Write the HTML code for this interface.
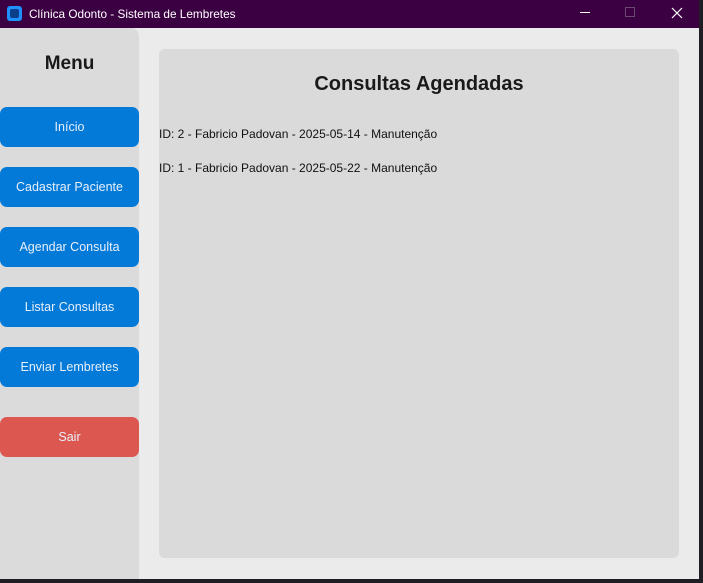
<!DOCTYPE html>
<html><head><style>
*{margin:0;padding:0;box-sizing:border-box}
body{width:703px;height:583px;background:#1e1e24;position:relative;overflow:hidden;font-family:"Liberation Sans",sans-serif}
#win{position:absolute;left:0;top:0;width:699px;height:579px;background:#ebebeb}
#title{position:absolute;left:0;top:0;width:699px;height:28px;background:#3b0042;color:#fff;font-size:11.8px}
#title .t{position:absolute;left:29px;top:7px}
#icon{position:absolute;left:7px;top:6px;width:15px;height:15px;border-radius:3px;background:#1e90ff}
#icon:after{content:"";position:absolute;left:3px;top:3px;width:9px;height:9px;border-radius:2px;background:#0b3f8a}
#side{position:absolute;left:0;top:28px;width:139px;height:551px;background:#dbdbdb;border-top-right-radius:8px}
#side h2{position:absolute;left:0;width:139px;top:25px;text-align:center;font-size:19px;font-weight:bold;color:#1a1a1a}
.b{position:absolute;left:0;width:139px;height:40px;border-radius:7px;background:#0379d8;color:#e8f0fa;font-size:12.5px;text-align:center;line-height:40px}
#panel{position:absolute;left:159px;top:49px;width:520px;height:509px;background:#dadada;border-radius:6px}
#panel h1{text-align:center;font-size:20px;font-weight:bold;color:#1a1a1a;margin-top:24px}
.r{position:absolute;left:0;font-size:12px;color:#111}
</style></head><body>
<div id="win">
<div id="title"><div id="icon"></div><span class="t">Clínica Odonto - Sistema de Lembretes</span>
<div style="position:absolute;left:580px;top:12px;width:10px;height:1px;background:#fff"></div>
<div style="position:absolute;left:625px;top:7px;width:10px;height:10px;border:1px solid #6a4a70"></div>
<svg style="position:absolute;left:671px;top:7px" width="12" height="12"><path d="M1 1L11 11M11 1L1 11" stroke="#fff" stroke-width="1.2"/></svg>
</div>
<div id="side"><h2>Menu</h2>
<div class="b" style="top:79px">Início</div>
<div class="b" style="top:139px">Cadastrar Paciente</div>
<div class="b" style="top:199px">Agendar Consulta</div>
<div class="b" style="top:259px">Listar Consultas</div>
<div class="b" style="top:319px">Enviar Lembretes</div>
<div class="b" style="top:389px;background:#dc5750">Sair</div>
</div>
<div id="panel"><h1>Consultas Agendadas</h1>
<div class="r" style="top:78px">ID: 2 - Fabricio Padovan - 2025-05-14 - Manutenção</div>
<div class="r" style="top:112px">ID: 1 - Fabricio Padovan - 2025-05-22 - Manutenção</div>
</div>
</div>
</body></html>
